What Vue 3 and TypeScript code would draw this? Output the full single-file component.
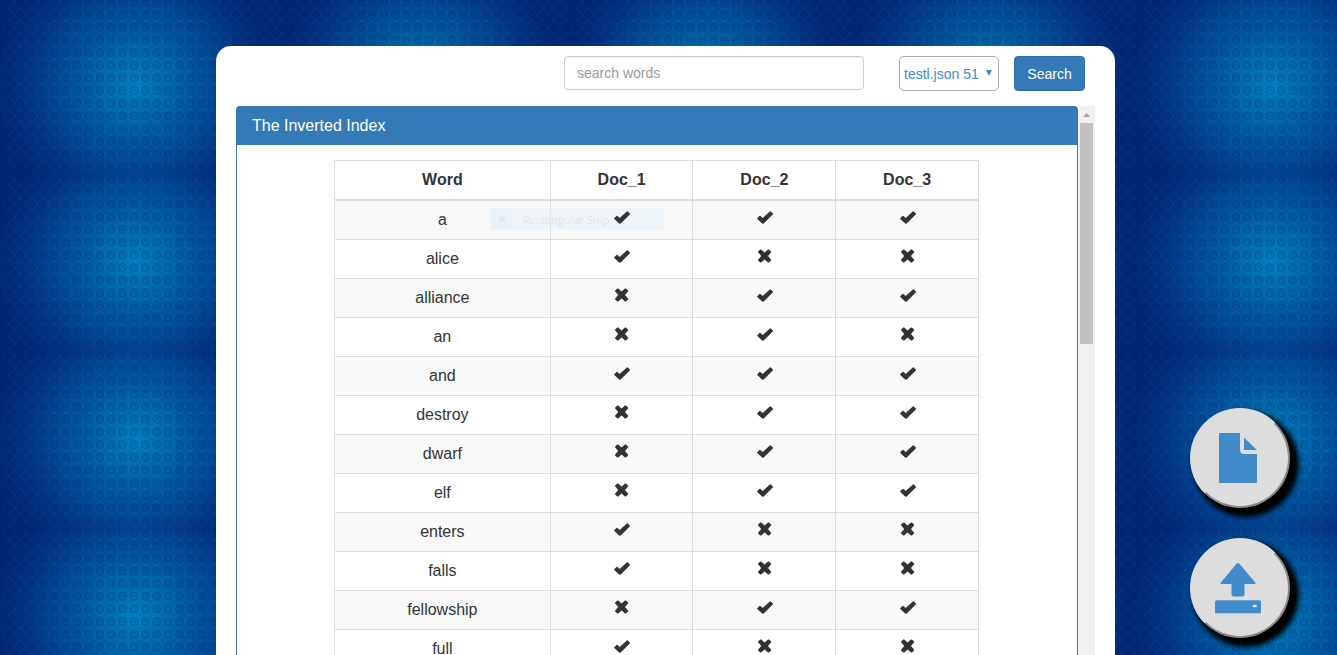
<script setup lang="ts">
import { ref } from 'vue'

interface IndexRow {
  word: string
  docs: boolean[]
}

const query = ref('')
const selected = ref('testl.json 51')
const docNames: string[] = ['Doc_1', 'Doc_2', 'Doc_3']

const rows: IndexRow[] = [
  { word: 'a', docs: [true, true, true] },
  { word: 'alice', docs: [true, false, false] },
  { word: 'alliance', docs: [false, true, true] },
  { word: 'an', docs: [false, true, false] },
  { word: 'and', docs: [true, true, true] },
  { word: 'destroy', docs: [false, true, true] },
  { word: 'dwarf', docs: [false, true, true] },
  { word: 'elf', docs: [false, true, true] },
  { word: 'enters', docs: [true, false, false] },
  { word: 'falls', docs: [true, false, false] },
  { word: 'fellowship', docs: [false, true, true] },
  { word: 'full', docs: [true, false, false] },
]

// Ring centres of one wallpaper tile (25 columns by 14 rows).
const rings: { x: number; y: number }[] = []
for (let r = 0; r < 14; r++) {
  for (let c = 0; c < 25; c++) {
    rings.push({ x: (c * 284) / 25 + 9, y: (r * 177) / 14 + 2 })
  }
}
</script>

<template>
  <div class="page">
    <svg class="wallpaper" aria-hidden="true">
      <defs>
        <radialGradient id="glow" gradientUnits="userSpaceOnUse" cx="0" cy="0" r="1" gradientTransform="translate(136 84) scale(138 138)">
          <stop offset="0" stop-color="#007fbc" />
          <stop offset="0.25" stop-color="#0067aa" />
          <stop offset="0.55" stop-color="#004b95" />
          <stop offset="0.8" stop-color="#003382" />
          <stop offset="1" stop-color="#002775" />
        </radialGradient>
        <pattern id="tile" width="284" height="177" patternUnits="userSpaceOnUse">
          <rect width="284" height="177" fill="url(#glow)" />
          <g v-for="(p, i) in rings" :key="i" :transform="`translate(${p.x} ${p.y})`" fill="none">
            <path d="M-5.7 0L0 -6.3L5.7 0L0 6.3Z" stroke="#2e8fd0" stroke-opacity=".1" />
            <circle r="3.9" stroke="#001f68" stroke-opacity=".36" />
            <path d="M-1.5 1.5V-.3a1.5 1.5 0 0 1 3 0V1.5" stroke="#001f68" stroke-opacity=".26" />
          </g>
        </pattern>
      </defs>
      <rect width="100%" height="100%" fill="url(#tile)" />
    </svg>

    <main class="card">
      <form class="toolbar" @submit.prevent>
        <input v-model="query" class="search" type="text" placeholder="search words" aria-label="search words" />
        <div class="picker">
          <select v-model="selected" class="file-select" aria-label="Indexed file">
            <option>testl.json 51</option>
          </select>
          <svg class="caret" viewBox="0 0 6 6" aria-hidden="true"><path d="M0 0H6L3 6Z" fill="#428bca" /></svg>
        </div>
        <button class="go" type="submit">Search</button>
      </form>

      <div class="results">
        <section class="panel">
          <h1 class="heading">The Inverted Index</h1>
          <div class="body">
            <table class="index">
              <colgroup>
                <col class="word-col" />
                <col v-for="name in docNames" :key="name" />
              </colgroup>
              <thead>
                <tr>
                  <th scope="col">Word</th>
                  <th v-for="name in docNames" :key="name" scope="col">{{ name }}</th>
                </tr>
              </thead>
              <tbody>
                <tr v-for="row in rows" :key="row.word">
                  <td>{{ row.word }}</td>
                  <td v-for="(hit, i) in row.docs" :key="i">
                    <svg v-if="hit" class="mark" viewBox="0 0 18 16" role="img" aria-label="yes">
                      <path d="M1.3 8.2L3.4 6Q3.9 5.6 4.4 6L6.7 8L13.8 1.5Q14.4 1 14.9 1.5L16.8 3.4Q17.3 3.9 16.8 4.4L7.7 13.4Q6.7 14.2 5.8 13.3L1.3 9Q.9 8.6 1.3 8.2Z" />
                    </svg>
                    <svg v-else class="mark" viewBox="0 0 18 16" role="img" aria-label="no">
                      <path d="M5.2 .6L8.6 3.6L12 .6Q12.5 .2 13 .6L15 2.6Q15.4 3.1 15 3.6L12 7L15 10.4Q15.4 10.9 15 11.4L13 13.4Q12.5 13.8 12 13.4L8.6 10.4L5.2 13.4Q4.7 13.8 4.2 13.4L2.2 11.4Q1.8 10.9 2.2 10.4L5.2 7L2.2 3.6Q1.8 3.1 2.2 2.6L4.2 .6Q4.7 .2 5.2 .6Z" />
                    </svg>
                  </td>
                </tr>
              </tbody>
            </table>
            <div class="snip"><span class="snip-dot"></span><span>Rectangular Snip</span></div>
          </div>
        </section>
        <div class="scrollbar" aria-hidden="true">
          <svg class="scroll-up" viewBox="0 0 17 17"><path d="M5 11L8.5 7L12 11Z" fill="#a0a0a0" /></svg>
          <div class="thumb"></div>
        </div>
      </div>
    </main>

    <div class="actions">
      <button class="round" type="button" aria-label="New file">
        <svg viewBox="2 2 96 96" aria-hidden="true">
          <path d="M30 25H50V41.5Q50 46 54.5 46H67V74Q67 75 66 75H30Q29 75 29 74V26Q29 25 30 25Z" />
          <path d="M54 29.5L66.8 42H54Z" />
        </svg>
      </button>
      <button class="round" type="button" aria-label="Upload">
        <svg viewBox="2 2 96 96" aria-hidden="true">
          <path d="M46.8 25.6Q48 24.4 49.2 25.6L65.2 44.5Q66.2 46 64.5 46H54.5V56Q54.5 58.5 52 58.5H44Q41.5 58.5 41.5 56V46H31.5Q29.8 46 30.8 44.5Z" />
          <path fill-rule="evenodd" d="M27 62.3H69Q71 62.3 71 64.5V75.3H25V64.5Q25 62.3 27 62.3ZM62.7 66.7V69.3H66.7V66.7Z" />
        </svg>
      </button>
    </div>
  </div>
</template>

<style>
body {
  margin: 0;
  overflow: hidden;
}
</style>

<style scoped>
.page {
  position: relative;
  display: flex;
  box-sizing: border-box;
  height: 100vh;
  padding: 46px 222px 0 216px;
  overflow: hidden;
  background: #003a86;
  color: #333;
  font-family: "Liberation Sans", Arial, sans-serif;
  font-size: 16px;
}

.wallpaper {
  position: absolute;
  inset: 0;
  width: 100%;
  height: 100%;
}

.card {
  position: relative;
  display: flex;
  flex: 1;
  flex-direction: column;
  min-width: 0;
  padding: 10px 20px 0;
  border-radius: 15px 15px 0 0;
  background: #fff;
}

.toolbar {
  display: flex;
  align-items: flex-start;
  justify-content: flex-end;
  margin: 0 10px 15px 0;
}

.search,
.file-select,
.go {
  box-sizing: border-box;
  font-family: inherit;
  font-size: 14px;
}

.search {
  width: 300px;
  height: 34px;
  padding: 6px 12px;
  border: 1px solid #ccc;
  border-radius: 4px;
  box-shadow: inset 0 1px 1px rgba(0, 0, 0, 0.075);
  color: #555;
}

.search::placeholder {
  color: #999;
}

.picker {
  position: relative;
  margin: 0 15px 0 35px;
}

.file-select {
  display: block;
  width: 100px;
  height: 35px;
  padding: 0 4px;
  border: 1px solid #a9a9a9;
  border-radius: 5px;
  appearance: none;
  background: #fff;
  color: #428bca;
}

.caret {
  position: absolute;
  top: 14px;
  right: 7px;
  width: 6px;
  height: 6px;
  pointer-events: none;
}

.go {
  min-width: 71px;
  height: 35px;
  padding: 0 12px;
  border: 1px solid #2e6da4;
  border-radius: 4px;
  background: #337ab7;
  color: #fff;
}

.results {
  display: flex;
  flex: 1;
  min-height: 0;
}

.panel {
  box-sizing: border-box;
  flex: 1;
  border: 1px solid #337ab7;
  border-bottom: 0;
  border-radius: 4px 4px 0 0;
}

.heading {
  margin: 0;
  padding: 10px 15px;
  background: #337ab7;
  color: #fff;
  font-size: 16px;
  font-weight: 400;
  line-height: 18px;
}

.body {
  position: relative;
  padding: 15px 98px 0 97px;
}

.index {
  width: 100%;
  border-collapse: collapse;
  table-layout: fixed;
  text-align: center;
  line-height: 22px;
}

.word-col {
  width: 33.5%;
}

.index th,
.index td {
  height: 22px;
  padding: 8px;
  border: 1px solid #ddd;
}

.index th {
  border-bottom-width: 2px;
}

.index tbody tr:nth-child(odd) {
  background: #f9f9f9;
}

.mark {
  position: relative;
  z-index: 1;
  display: inline-block;
  width: 18px;
  height: 16px;
  margin: 1px 0 5px 1px;
  vertical-align: top;
  fill: #333;
}

.snip {
  position: absolute;
  top: 63px;
  left: 254px;
  display: flex;
  align-items: center;
  box-sizing: border-box;
  width: 173px;
  height: 22px;
  background: linear-gradient(90deg, rgba(220, 237, 252, 0.55) 21px, rgba(226, 240, 250, 0.45) 21px);
  color: #e4e4e6;
  font-family: "Open Sans", sans-serif;
  font-size: 11px;
  pointer-events: none;
}

.snip-dot {
  width: 6px;
  height: 6px;
  margin: 0 18px 0 8px;
  border-radius: 50%;
  background: #e6e6e6;
}

.scrollbar {
  width: 17px;
  background: #f1f1f1;
}

.scroll-up {
  display: block;
  width: 17px;
  height: 17px;
}

.thumb {
  height: 221px;
  margin: 0 2px;
  background: #c1c1c1;
}

.actions {
  position: fixed;
  right: 47px;
  bottom: 17px;
  display: grid;
  gap: 30px;
}

.round {
  box-sizing: border-box;
  width: 100px;
  height: 100px;
  padding: 0;
  border: 2px outset #ddd;
  border-radius: 50%;
  background: #ddd;
  box-shadow: 6px 6px 5px 3px #000;
}

.round svg {
  display: block;
  width: 96px;
  height: 96px;
  fill: #428bca;
}
</style>
